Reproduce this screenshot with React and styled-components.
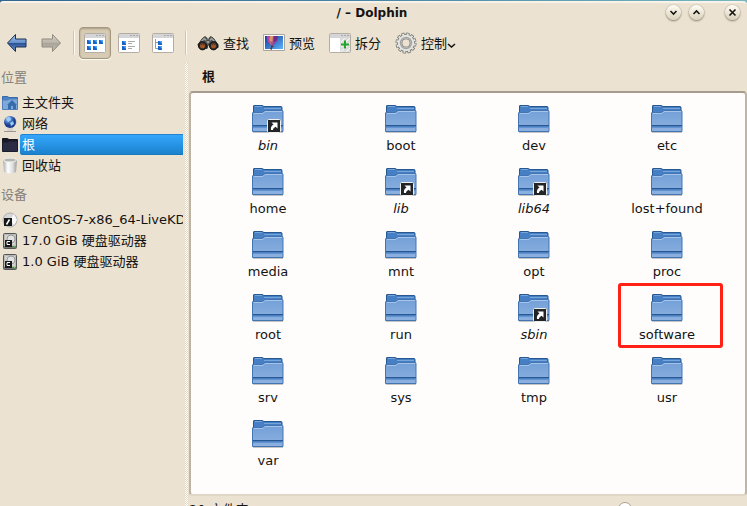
import React from "react";
import styled, { createGlobalStyle, css } from "styled-components";

const Global = createGlobalStyle`
  * { box-sizing: border-box; }
  body {
    margin: 0;
    background: #ebe2d1;
    color: #141312;
    font: 13px/21px "DejaVu Sans", "Noto Sans CJK SC", sans-serif;
  }
  button { font: inherit; color: inherit; border: 0; background: none; padding: 0; }
  ul { list-style: none; margin: 0; padding: 0; }
  svg { display: block; flex: none; }
`;

const Window = styled.div`
  display: flex;
  flex-direction: column;
  height: 100vh;
  overflow: hidden;
  background: linear-gradient(90deg, #33658d, #4b86a4 50%, #78b8bd) top / 100% 6px no-repeat;
`;

const Frame = styled.div`
  flex: 1;
  min-height: 0;
  display: flex;
  flex-direction: column;
  margin-top: 1px;
  border-top: 2px solid #f7f2ea;
  border-radius: 3px 4px 0 0;
  background: #ebe2d1;
`;

const TitleBar = styled.header`
  display: grid;
  grid-template-columns: 1fr auto 1fr;
  flex: none;
  height: 20px;
  padding: 0 7px 0 4px;
`;

const Title = styled.h1`
  grid-column: 2;
  margin: 0;
  font-size: 12px;
  line-height: 20px;
  font-weight: bold;
`;

const WindowButtons = styled.div`
  display: flex;
  justify-content: flex-end;
  gap: 8px;
  padding-top: 2px;
`;

const RoundButton = styled.button`
  display: grid;
  place-items: center;
  width: 15px;
  height: 15px;
  border-radius: 50%;
  background: linear-gradient(#fffdf6, #d9d0b9);
  box-shadow: 0 1px 2px #8a8274, 0 0 1px #81796c;
  &:last-child { margin-left: 13px; }
`;

const Toolbar = styled.nav`
  display: flex;
  align-items: center;
  gap: 2px;
  flex: none;
  height: 40px;
  padding-left: 1px;
`;

const ToolButton = styled.button`
  display: flex;
  align-items: center;
  justify-content: center;
  flex: none;
  min-width: 32px;
  height: 32px;
  border-radius: 4px;
  white-space: nowrap;
  ${(p) => p.$active && css`
    background: #d8cbb3;
    border: 1px solid #a39780;
    box-shadow: inset 0 1px 2px #a99d87, 0 1px 0 #fffaf0;
  `}
`;

const TextTools = styled.div`
  display: flex;
  gap: 14px;
  padding-left: 6px;
`;

const TextTool = styled(ToolButton)`
  gap: 4px;
`;

const MenuLabel = styled.span`
  display: flex;
  align-items: center;
`;

const Divider = styled.i`
  flex: none;
  width: 2px;
  height: 24px;
  margin: 0 2px 0 4px;
  border-left: 1px solid #cfc5b2;
  border-right: 1px solid #fffaf0;
`;

const Body = styled.div`
  display: flex;
  flex: 1;
  min-height: 0;
`;

const Places = styled.aside`
  flex: none;
  width: 183px;
  overflow: hidden;
`;

const SectionTitle = styled.h2`
  margin: 0;
  padding: 4px 0 4px 1px;
  font-size: 13px;
  line-height: 21px;
  font-weight: normal;
  color: #86807a;
`;

const PlaceList = styled.ul`
  && { margin-bottom: 4px; }
`;

const Place = styled.li`
  display: flex;
  align-items: center;
  gap: 2px;
  height: 21px;
  padding-left: 2px;
`;

const PlaceLink = styled.a`
  flex: 1;
  min-width: 0;
  height: 21px;
  padding-left: 2px;
  overflow: hidden;
  white-space: nowrap;
  color: inherit;
  text-decoration: none;
  ${(p) => p.$active && css`
    color: #fff;
    border-radius: 3px 0 0 3px;
    background: linear-gradient(#36a8ff, #1980cb);
    box-shadow: inset 0 1px #2384cd, inset 0 -1px #187abd;
  `}
`;

const Splitter = styled.div`
  flex: none;
  width: 3px;
  margin: 0 1px 0 2px;
  background: repeating-conic-gradient(#fff 0 25%, #e3d9c8 0 50%) 0 0 / 2px 2px;
`;

const Main = styled.main`
  flex: 1;
  min-width: 0;
  display: flex;
  flex-direction: column;
`;

const Location = styled.div`
  flex: none;
  padding: 3px 0 4px 13px;
  font-weight: bold;
`;

const FileView = styled.section`
  flex: 1;
  min-height: 0;
  padding: 9px 1px 0 0;
  border: 2px solid #bfb5a5;
  border-top-color: #a69c8d;
  border-bottom-color: #e0d7c6;
  border-radius: 4px;
  background: #fffdfb;
`;

const Files = styled.ul`
  display: grid;
  grid-template-columns: repeat(auto-fill, 133px);
  grid-auto-rows: 63px;
  justify-content: center;
`;

const FileItem = styled.li`
  position: relative;
  display: flex;
  flex-direction: column;
  align-items: center;
  font-style: ${(p) => (p.$link ? "italic" : "normal")};
  ${(p) => p.$marked && css`
    &::after {
      content: "";
      position: absolute;
      inset: -8px 11px 6px 17px;
      border: 3px solid #ff2116;
      border-radius: 3px;
    }
  `}
`;

const FileName = styled.span`
  line-height: 19px;
`;

const Status = styled.footer`
  display: flex;
  flex: none;
  height: 10px;
  padding-top: 4px;
`;

const StatusText = styled.span`
  flex: 1;
  line-height: 20px;
`;

const ZoomSlider = styled.input`
  appearance: none;
  width: 170px;
  height: 14px;
  margin: 2px 3px 0 0;
  background: none;
  &::-webkit-slider-thumb {
    appearance: none;
    width: 14px;
    height: 14px;
    border: 1px solid #aaa08e;
    border-radius: 50%;
    background: #fff;
  }
`;

const Chevron = ({ d, size = 9 }) => (
  <svg width={size} height={size} viewBox="0 0 9 9" fill="none" stroke="#161412" strokeWidth="1.6"><path d={d} /></svg>
);

const Arrow = ({ forward }) => {
  const id = forward ? "fwd" : "back";
  return (
    <svg width="22" height="22" viewBox="0 0 22 22">
      <defs><linearGradient id={id} x2="0" y2="1">
        <stop stopColor={forward ? "#d9d4ca" : "#a5c6ed"} />
        <stop offset=".48" stopColor={forward ? "#b9b3a8" : "#668fcc"} />
        <stop offset=".52" stopColor={forward ? "#a9a398" : "#2b5395"} />
        <stop offset="1" stopColor={forward ? "#c5bfb4" : "#6f9bd3"} />
      </linearGradient></defs>
      <path d={forward ? "M20.5 11 12.5 2.5V7H2v8h10.500v4.5Z" : "M1.5 11 9.500 2.5V7H20v8H9.500v4.5Z"}
        fill={`url(#${id})`} stroke={forward ? "#918b80" : "#1c3153"} strokeLinejoin="round" />
    </svg>
  );
};

const MiniWindow = ({ children }) => (
  <svg width="22" height="22" viewBox="0 0 22 22">
    <rect x=".5" y="1.5" width="21" height="19" rx="1" fill="#fff" stroke="#b3ada4" />
    <path d="M1 2h20v4H1z" fill="#d5d5d8" /><path d="M12 3h2v1h-2zM15 3h2v1h-2zM18 3h2v1h-2z" fill="#aaa" />
    {children}
  </svg>
);

const Tile = ({ x, y }) => (
  <g><path d={`M${x} ${y}h4v4h-4z`} fill="#1663cc" /><path d={`M${x + 1} ${y}h3v3z`} fill="#48a2ef" /></g>
);

const IconsMode = () => (
  <MiniWindow>{[[3, 8], [9, 8], [15, 8], [3, 14], [9, 14]].map(([x, y]) => <Tile key={`${x}-${y}`} x={x} y={y} />)}</MiniWindow>
);
const DetailsMode = () => (
  <MiniWindow><Tile x={4} y={9} /><Tile x={4} y={14} /><path d="M10 9.5h7M10 11.5h4M10 14.5h7M10 16.5h4" stroke="#aaa" /></MiniWindow>
);
const ColumnsMode = () => (
  <MiniWindow><path d="M3.5 7v9.500h3M3.500 10.500h3" fill="none" stroke="#999" /><Tile x={6} y={9} /><Tile x={6} y={14} /></MiniWindow>
);

const Binoculars = () => (
  <svg width="22" height="22" viewBox="0 0 24 22">
    <path d="M1 13 6 6l3-2 2 2v2h2V6l2-2 3 2 5 7v3l-8 1-1-4h-2l-1 4-8-1Z" fill="#555958" stroke="#242625" />
    <path d="m5 9 3-3 2 2M19 9l-3-3-2 2" stroke="#a0a5a3" strokeWidth="1.500" fill="none" />
    {[6, 18].map((x) => <g key={x}><circle cx={x} cy="14" r="4.500" fill="#272928" stroke="#111" /><circle cx={x} cy="14" r="2.800" fill="#a25427" /><path d={`M${x - 2} 13q2-2 4 0`} stroke="#422c20" fill="none" /></g>)}
    <circle cx="12" cy="10" r="1.500" fill="#999" />
  </svg>
);

const Preview = () => (
  <svg width="22" height="22" viewBox="0 0 22 22">
    <defs><linearGradient id="sky" x2="1" y2="1"><stop stopColor="#123a94" /><stop offset="1" stopColor="#5bb4ff" /></linearGradient></defs>
    <path d="M.5 2.500h21v16H.5z" fill="#fff" stroke="#aaa69f" /><path d="M2 4h18v13H2z" fill="url(#sky)" />
    <path d="M4 4h11c1 4-2 7-6 10C5 11 3 8 4 4" fill="#b5419b" /><path d="M7 4h3l-1 10C6 10 6 7 7 4" fill="#d9956a" /><path d="M11 4h4c0 4-3 7-5 9" fill="#6d2c87" />
    <path d="M7 9q3 2 6 0l-4 5Z" fill="#97519a" /><path d="m8 13 3 1-2 2v2l-2-1 1-2Z" fill="#64383a" />
  </svg>
);

const Split = () => (
  <MiniWindow><path d="M11 6h10v14H11z" fill="#ddd" /><path d="m12 10 4-4M12 15l9-9M12 20l9-9M17 20l4-4" stroke="#f8f8f8" /><path d="M12 12.500h8M16 8.500v8" stroke="#23a52a" strokeWidth="2" /></MiniWindow>
);

const Gear = () => (
  <svg width="22" height="22" viewBox="0 0 24 24">
    <circle cx="12" cy="12" r="9.500" fill="none" stroke="#74736f" strokeWidth="4" strokeDasharray="3.200 1.774" />
    <circle cx="12" cy="12" r="7" fill="none" stroke="#77766f" strokeWidth="6" />
    <circle cx="12" cy="12" r="9.200" fill="none" stroke="#e4e4e2" strokeWidth="3" strokeDasharray="2 2.817" strokeDashoffset="-.6" />
    <circle cx="12" cy="12" r="7" fill="none" stroke="#e4e4e2" strokeWidth="4" />
    <circle cx="12" cy="12" r="6" fill="none" stroke="#a5a5a3" strokeWidth="1.500" />
  </svg>
);

const LinkMark = ({ x, y, size }) => (
  <svg x={x} y={y} width={size} height={size} viewBox="0 0 14 14">
    <rect x=".5" y=".5" width="13" height="13" rx="1" fill="#222426" stroke="#eee" />
    <path d="M4.500 3.500h6v6L8.600 7.700C7 8.500 6 9.500 6 11H4C3.500 8.500 4.500 6.800 6.500 5.500Z" fill="#fff" />
  </svg>
);

const Folder = ({ link }) => (
  <svg width="34" height="34" viewBox="0 1 34 34">
    <defs><linearGradient id="folder" x2="0" y2="1"><stop stopColor="#73a0d8" /><stop offset="1" stopColor="#8db1df" /></linearGradient></defs>
    <path d="M2 31.500h30" stroke="#c5c4c2" />
    <path d="M2.500 5q0-.5.500-.5h8l2 1h17q1 0 1 1v6h-28.500Z" fill="#467fc4" stroke="#275890" />
    <path d="M4 5.500h7M13 7.500h17" stroke="#76a5dc" />
    <path d="M1.500 12q0-.5.500-.5h9l3-2h17q1 0 1 1v20H1.500Z" fill="url(#folder)" stroke="#4475b3" />
    <path d="M3 12.500h9l2-2h17" stroke="#a5c4ea" fill="none" />
    <path d="M2 24h30v2H2z" fill="#4c80c0" /><path d="M2 24.500h30" stroke="#285893" /><path d="M2 26.500h30" stroke="#6193d0" />
    {link && <LinkMark x={16} y={18} size={14} />}
  </svg>
);

const SmallFolder = ({ dark }) => (
  <svg width="16" height="16" viewBox="0 0 16 16">
    <path d="M.5 1.500h5l1.500 1h8.500v3H.5Z" fill={dark ? "#171925" : "#4d83c6"} stroke={dark ? "#151621" : "#356ba9"} />
    <path d="M.5 5h5l2-1h8v10.500H.5Z" fill={dark ? "#2b2b43" : "#7fa8dc"} stroke={dark ? "#1b1c2c" : "#527fba"} />
    {!dark && <path d="m5 10 5-5 5 5h-1v4h-3v-3H9v3H6v-4Z" fill="#386da9" />}
  </svg>
);

const Globe = () => (
  <svg width="16" height="18" viewBox="0 0 16 18">
    <defs><radialGradient id="globe" cx=".35" cy=".25"><stop stopColor="#d9efff" /><stop offset=".45" stopColor="#568bd4" /><stop offset="1" stopColor="#1c3f90" /></radialGradient></defs>
    <path d="M2 16.500h12" stroke="#9a958d" /><path d="M6 12h5v4H5Z" fill="#d4d3d0" /><path d="M12 2q5 6-2 11" stroke="#aaa" fill="none" />
    <circle cx="8" cy="7" r="6" fill="url(#globe)" /><path d="m4 3 4-1 1 3-3 2Zm4 5 3-2 1 3-3 2Z" fill="#9dcaf4" />
  </svg>
);

const Trash = () => (
  <svg width="16" height="18" viewBox="0 0 16 18">
    <defs><linearGradient id="bin"><stop stopColor="#aaa" /><stop offset=".35" stopColor="#fff" /><stop offset=".7" stopColor="#ddd" /><stop offset="1" stopColor="#999" /></linearGradient></defs>
    <path d="m1 3 1 12q6 3 12 0l1-12Z" fill="url(#bin)" /><ellipse cx="8" cy="3" rx="6.500" ry="2" fill="#b5b5b2" stroke="#f4f4f0" />
  </svg>
);

const Disc = () => (
  <svg width="16" height="16" viewBox="0 0 16 16"><circle cx="8" cy="8" r="7" fill="#d7d7d9" stroke="#b1afac" /><path d="M8 8 12 2l3 6-3 5Z" fill="#f9f9fb" /><circle cx="8" cy="8" r="2" fill="#fff" /><rect x="2" y="6" width="8" height="8" fill="#171819" /><path d="m4.500 12.500 3-5" stroke="#fff" strokeWidth="1.500" /></svg>
);

const Disk = () => (
  <svg width="16" height="16" viewBox="0 0 16 16">
    <rect x="1.500" y=".5" width="13" height="15" rx="1" fill="#bbbcb9" stroke="#545653" /><path d="M3 2h10v10H3z" fill="#d2d2cf" /><circle cx="9" cy="6" r="4" fill="#e2e2e2" stroke="#999" />
    <path d="M2 13h12v2H2z" fill="#777" /><path d="M12 13h1v1h-1z" fill="#44dc30" /><path d="M3 7h7v7H3z" fill="#171819" /><path d="M8 8.500H5v3h3" stroke="#fff" fill="none" />
  </svg>
);

const places = [
  { name: "主文件夹", icon: <SmallFolder /> },
  { name: "网络", icon: <Globe /> },
  { name: "根", icon: <SmallFolder dark />, active: true },
  { name: "回收站", icon: <Trash /> },
];
const devices = [
  { name: "CentOS-7-x86_64-LiveKDE", icon: <Disc /> },
  { name: "17.0 GiB 硬盘驱动器", icon: <Disk /> },
  { name: "1.0 GiB 硬盘驱动器", icon: <Disk /> },
];
const files = ["bin", "boot", "dev", "etc", "home", "lib", "lib64", "lost+found", "media", "mnt", "opt", "proc", "root", "run", "sbin", "software", "srv", "sys", "tmp", "usr", "var"];
const links = new Set(["bin", "lib", "lib64", "sbin"]);

const PlaceSection = ({ title, items }) => (
  <section>
    <SectionTitle>{title}</SectionTitle>
    <PlaceList>{items.map((p) => <Place key={p.name}>{p.icon}<PlaceLink href="#" $active={p.active}>{p.name}</PlaceLink></Place>)}</PlaceList>
  </section>
);

export default function App() {
  return (
    <>
      <Global />
      <Window>
        <Frame>
          <TitleBar>
            <Title>/ – Dolphin</Title>
            <WindowButtons>
              <RoundButton aria-label="最小化"><Chevron d="m1.500 3 3 3 3-3" /></RoundButton>
              <RoundButton aria-label="最大化"><Chevron d="m1.500 6 3-3 3 3" /></RoundButton>
              <RoundButton aria-label="关闭"><Chevron d="m1.500 1.500 6 6M7.500 1.500l-6 6" /></RoundButton>
            </WindowButtons>
          </TitleBar>
          <Toolbar>
            <ToolButton aria-label="后退"><Arrow /></ToolButton>
            <ToolButton aria-label="前进"><Arrow forward /></ToolButton>
            <Divider />
            <ToolButton aria-label="图标" $active><IconsMode /></ToolButton>
            <ToolButton aria-label="详细信息"><DetailsMode /></ToolButton>
            <ToolButton aria-label="列"><ColumnsMode /></ToolButton>
            <Divider />
            <TextTools>
              <TextTool><Binoculars />查找</TextTool>
              <TextTool><Preview />预览</TextTool>
              <TextTool><Split />拆分</TextTool>
              <TextTool><Gear /><MenuLabel>控制<Chevron d="m1 5 3.500 3L8 5" /></MenuLabel></TextTool>
            </TextTools>
          </Toolbar>
          <Body>
            <Places>
              <PlaceSection title="位置" items={places} />
              <PlaceSection title="设备" items={devices} />
            </Places>
            <Splitter />
            <Main>
              <Location>根</Location>
              <FileView>
                <Files>
                  {files.map((name) => (
                    <FileItem key={name} $link={links.has(name)} $marked={name === "software"}>
                      <Folder link={links.has(name)} /><FileName>{name}</FileName>
                    </FileItem>
                  ))}
                </Files>
              </FileView>
              <Status>
                <StatusText>20 文件夹</StatusText>
                <ZoomSlider type="range" aria-label="图标大小" min="0" max="100" defaultValue="28" />
              </Status>
            </Main>
          </Body>
        </Frame>
      </Window>
    </>
  );
}
